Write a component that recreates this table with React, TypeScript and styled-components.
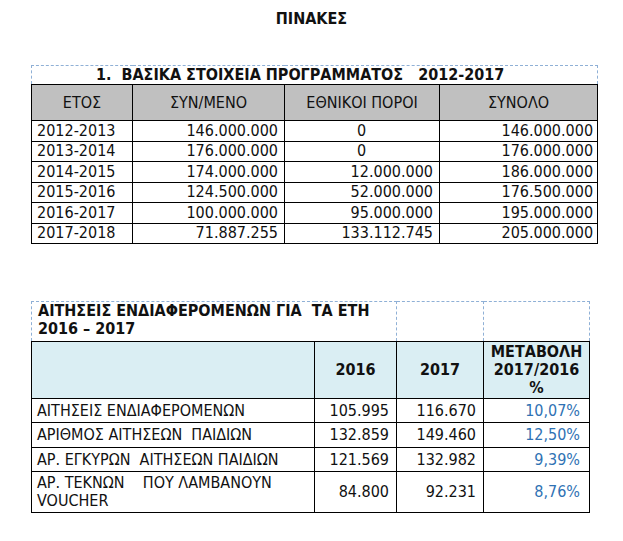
import React from 'react';
import styled, { createGlobalStyle } from 'styled-components';

const GlobalStyle = createGlobalStyle`
  html, body {
    margin: 0;
    padding: 0;
    background: #ffffff;
  }
  body {
    font-family: "DejaVu Sans Condensed", "DejaVu Sans", sans-serif;
    font-stretch: condensed;
    color: #111111;
  }
`;

const Page = styled.div`
  width: 623px;
  height: 541px;
  padding: 9px 0 0 31px;
  box-sizing: border-box;
  display: flex;
  flex-direction: column;
`;

const PageTitle = styled.h1`
  margin: 0 0 37px -31px;
  width: 623px;
  text-align: center;
  font-size: 16px;
  line-height: 19px;
  font-weight: bold;
`;

const Table = styled.table<{ $width: number }>`
  width: ${({ $width }) => $width}px;
  border-collapse: collapse;
  table-layout: fixed;
  font-size: 16px;
`;

const Spacer = styled.div<{ $h: number }>`
  height: ${({ $h }) => $h}px;
  flex: none;
`;

const DashedCell = styled.td<{ $pl?: number }>`
  border: 1px dashed #8fb0d6;
  border-bottom: 1px solid #000;
  font-weight: bold;
  text-align: left;
  vertical-align: top;
  padding: 0 6px 0 ${({ $pl }) => $pl ?? 6}px;
  line-height: 18px;
  white-space: pre-wrap;
`;

const HeadCell = styled.th<{ $bg: string; $bold?: boolean }>`
  border: 1px solid #000;
  background: ${({ $bg }) => $bg};
  font-weight: ${({ $bold }) => ($bold ? 'bold' : 'normal')};
  text-align: center;
  vertical-align: middle;
  padding: 0 4px;
  line-height: 18px;
`;

const Cell = styled.td<{ $align?: string; $pr?: number; $blue?: boolean }>`
  border: 1px solid #000;
  text-align: ${({ $align }) => $align || 'right'};
  padding: 0 ${({ $pr }) => $pr ?? 6}px 0 5px;
  line-height: 18px;
  vertical-align: middle;
  white-space: pre-wrap;
  color: ${({ $blue }) => ($blue ? '#2f72b4' : '#111111')};
`;

const Row = styled.tr<{ $h: number }>`
  height: ${({ $h }) => $h}px;
`;

type ProgramRow = { year: string; cofunded: string; national: string; total: string };

const programRows: ProgramRow[] = [
  { year: '2012-2013', cofunded: '146.000.000', national: '0', total: '146.000.000' },
  { year: '2013-2014', cofunded: '176.000.000', national: '0', total: '176.000.000' },
  { year: '2014-2015', cofunded: '174.000.000', national: '12.000.000', total: '186.000.000' },
  { year: '2015-2016', cofunded: '124.500.000', national: '52.000.000', total: '176.500.000' },
  { year: '2016-2017', cofunded: '100.000.000', national: '95.000.000', total: '195.000.000' },
  { year: '2017-2018', cofunded: '71.887.255', national: '133.112.745', total: '205.000.000' },
];

type ApplicationRow = { label: string; y2016: string; y2017: string; change: string; h: number };

const applicationRows: ApplicationRow[] = [
  { label: 'ΑΙΤΗΣΕΙΣ ΕΝΔΙΑΦΕΡΟΜΕΝΩΝ', y2016: '105.995', y2017: '116.670', change: '10,07%', h: 24 },
  { label: 'ΑΡΙΘΜΟΣ ΑΙΤΗΣΕΩΝ  ΠΑΙΔΙΩΝ', y2016: '132.859', y2017: '149.460', change: '12,50%', h: 25 },
  { label: 'ΑΡ. ΕΓΚΥΡΩΝ  ΑΙΤΗΣΕΩΝ ΠΑΙΔΙΩΝ', y2016: '121.569', y2017: '132.982', change: '9,39%', h: 24 },
  { label: 'ΑΡ. ΤΕΚΝΩΝ    ΠΟΥ ΛΑΜΒΑΝΟΥΝ VOUCHER', y2016: '84.800', y2017: '92.231', change: '8,76%', h: 41 },
];

const ProgramTable = () => (
  <Table $width={566}>
    <colgroup>
      <col style={{ width: 101 }} />
      <col style={{ width: 152 }} />
      <col style={{ width: 155 }} />
      <col style={{ width: 158 }} />
    </colgroup>
    <tbody>
      <Row $h={19}>
        <DashedCell colSpan={4} $pl={64}>
          {'1.  ΒΑΣΙΚΑ ΣΤΟΙΧΕΙΑ ΠΡΟΓΡΑΜΜΑΤΟΣ   2012-2017'}
        </DashedCell>
      </Row>
      <Row $h={36}>
        <HeadCell $bg="#c0c0c0">ΕΤΟΣ</HeadCell>
        <HeadCell $bg="#c0c0c0">ΣΥΝ/ΜΕΝΟ</HeadCell>
        <HeadCell $bg="#c0c0c0">ΕΘΝΙΚΟΙ ΠΟΡΟΙ</HeadCell>
        <HeadCell $bg="#c0c0c0">ΣΥΝΟΛΟ</HeadCell>
      </Row>
      {programRows.map((r) => (
        <Row $h={20.5} key={r.year}>
          <Cell $align="left">{r.year}</Cell>
          <Cell>{r.cofunded}</Cell>
          <Cell $align={r.national === '0' ? 'center' : 'right'}>{r.national}</Cell>
          <Cell $pr={4}>{r.total}</Cell>
        </Row>
      ))}
    </tbody>
  </Table>
);

const ApplicationsTable = () => (
  <Table $width={558}>
    <colgroup>
      <col style={{ width: 283 }} />
      <col style={{ width: 82 }} />
      <col style={{ width: 87 }} />
      <col style={{ width: 106 }} />
    </colgroup>
    <tbody>
      <Row $h={40}>
        <DashedCell colSpan={2}>
          {'ΑΙΤΗΣΕΙΣ ΕΝΔΙΑΦΕΡΟΜΕΝΩΝ ΓΙΑ  ΤΑ ΕΤΗ 2016 – 2017'}
        </DashedCell>
        <DashedCell />
        <DashedCell />
      </Row>
      <Row $h={57}>
        <HeadCell $bg="#daeef3" />
        <HeadCell $bg="#daeef3" $bold>2016</HeadCell>
        <HeadCell $bg="#daeef3" $bold>2017</HeadCell>
        <HeadCell $bg="#daeef3" $bold>
          ΜΕΤΑΒΟΛΗ
          <br />
          2017/2016
          <br />%
        </HeadCell>
      </Row>
      {applicationRows.map((r) => (
        <Row $h={r.h} key={r.label}>
          <Cell $align="left">{r.label}</Cell>
          <Cell $pr={7}>{r.y2016}</Cell>
          <Cell $pr={7}>{r.y2017}</Cell>
          <Cell $pr={9} $blue>{r.change}</Cell>
        </Row>
      ))}
    </tbody>
  </Table>
);

export default function App() {
  return (
    <>
      <GlobalStyle />
      <Page>
        <PageTitle>ΠΙΝΑΚΕΣ</PageTitle>
        <ProgramTable />
        <Spacer $h={57} />
        <ApplicationsTable />
      </Page>
    </>
  );
}
